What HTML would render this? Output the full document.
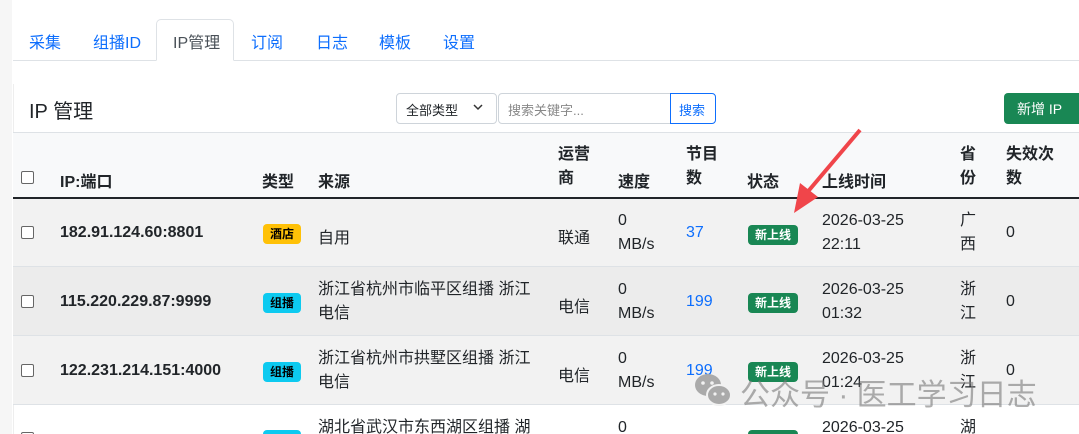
<!DOCTYPE html>
<html style="width:1079px;height:434px;overflow:hidden"><head><meta charset="utf-8"><style>
*{box-sizing:border-box;margin:0;padding:0}
body{width:1079px;height:434px;overflow:hidden;background:#fff;font-family:"Liberation Sans","Noto Sans CJK SC",sans-serif;color:#212529;font-size:16px;position:relative}
.a{position:absolute;white-space:nowrap}
.strip{left:0;top:0;width:12px;height:434px;background:#f6f6f6}
.tab{color:#0d6efd;top:29px;font-size:16px}
.cb{width:13px;height:13px;border:1px solid #666;border-radius:2px;background:#fff}
.b{font-weight:bold}
.badge{font-size:12px;font-weight:bold;border-radius:4px;text-align:center;line-height:20px;height:20px}
.blue{color:#0d6efd}
.lh{line-height:24px}
</style></head><body>
<div class="a strip"></div>
<div class="a" style="left:13px;top:60px;width:1066px;height:1px;background:#dee2e6"></div>
<div class="a" style="left:156px;top:19px;width:78px;height:42px;border:1px solid #dee2e6;border-bottom:1px solid #fff;border-radius:5px 5px 0 0;background:#fff"></div>
<div class="a tab" style="left:29px">采集</div>
<div class="a tab" style="left:93px">组播ID</div>
<div class="a tab" style="left:173px;color:#495057">IP管理</div>
<div class="a tab" style="left:251px">订阅</div>
<div class="a tab" style="left:316px">日志</div>
<div class="a tab" style="left:379px">模板</div>
<div class="a tab" style="left:443px">设置</div>
<div class="a" style="left:13px;top:84px;width:1066px;height:350px;border-left:1px solid #eee"></div>
<div class="a" style="left:13px;top:132px;width:1066px;height:1px;background:#dee2e6"></div>
<div class="a" style="left:29px;top:95px;font-size:20px">IP 管理</div>
<div class="a" style="left:396px;top:93px;width:101px;height:31px;border:1px solid #ced4da;border-radius:4px;font-size:13px;padding:6px 0 0 9px">全部类型</div>
<svg class="a" style="left:472px;top:102px" width="12" height="10"><path d="M2 3l4 4 4-4" stroke="#333" stroke-width="1.5" fill="none"/></svg>
<div class="a" style="left:498px;top:93px;width:173px;height:31px;border:1px solid #ced4da;border-radius:4px 0 0 4px;font-size:13px;color:#888;padding:6px 0 0 9px">搜索关键字...</div>
<div class="a" style="left:670px;top:93px;width:46px;height:31px;border:1px solid #0d6efd;border-radius:0 4px 4px 0;font-size:13px;color:#0d6efd;padding:6px 0 0 8px">搜索</div>
<div class="a" style="left:1004px;top:93px;width:80px;height:31px;background:#198754;border-radius:4px;color:#fff;font-size:14px;padding:6px 0 0 13px">新增 IP</div>
<div class="a" style="left:13px;top:133px;width:1066px;height:64px;background:#f8f9fa"></div>
<div class="a" style="left:13px;top:197px;width:1066px;height:2px;background:#212529"></div>
<div class="a cb" style="left:21px;top:171px"></div>
<div class="a b" style="left:60px;top:168px">IP:端口</div>
<div class="a b" style="left:262px;top:168px">类型</div>
<div class="a b" style="left:318px;top:168px">来源</div>
<div class="a b lh" style="left:558px;top:143px">运营<br>商</div>
<div class="a b" style="left:618px;top:168px">速度</div>
<div class="a b lh" style="left:686px;top:143px">节目<br>数</div>
<div class="a b" style="left:747px;top:168px">状态</div>
<div class="a b" style="left:822px;top:168px">上线时间</div>
<div class="a b lh" style="left:960px;top:143px">省<br>份</div>
<div class="a b lh" style="left:1006px;top:143px">失效次<br>数</div>
<div class="a" style="left:13px;top:199px;width:1066px;height:68px;background:#f2f2f2;border-bottom:1px solid #dee2e6"></div>
<div class="a" style="left:13px;top:267px;width:1066px;height:69px;background:#ececec;border-bottom:1px solid #dee2e6"></div>
<div class="a" style="left:13px;top:336px;width:1066px;height:69px;background:#f2f2f2;border-bottom:1px solid #dee2e6"></div>

<div class="a cb" style="left:21px;top:226px"></div>
<div class="a b" style="left:60px;top:224px">182.91.124.60:8801</div>
<div class="a badge" style="left:263px;top:224px;width:38px;background:#ffc107;color:#000">酒店</div>
<div class="a" style="left:318px;top:224px">自用</div>
<div class="a" style="left:558px;top:224px">联通</div>
<div class="a lh" style="left:618px;top:209px">0<br>MB/s</div>
<div class="a blue" style="left:686px;top:224px">37</div>
<div class="a badge" style="left:748px;top:225px;width:50px;background:#198754;color:#fff">新上线</div>
<div class="a lh" style="left:822px;top:209px">2026-03-25<br>22:11</div>
<div class="a lh" style="left:960px;top:209px">广<br>西</div>
<div class="a" style="left:1006px;top:224px">0</div>

<div class="a cb" style="left:21px;top:295px"></div>
<div class="a b" style="left:60px;top:293px">115.220.229.87:9999</div>
<div class="a badge" style="left:263px;top:293px;width:38px;background:#0dcaf0;color:#000">组播</div>
<div class="a lh" style="left:318px;top:278px">浙江省杭州市临平区组播 浙江<br>电信</div>
<div class="a" style="left:558px;top:293px">电信</div>
<div class="a lh" style="left:618px;top:278px">0<br>MB/s</div>
<div class="a blue" style="left:686px;top:293px">199</div>
<div class="a badge" style="left:748px;top:293px;width:50px;background:#198754;color:#fff">新上线</div>
<div class="a lh" style="left:822px;top:278px">2026-03-25<br>01:32</div>
<div class="a lh" style="left:960px;top:278px">浙<br>江</div>
<div class="a" style="left:1006px;top:293px">0</div>

<div class="a cb" style="left:21px;top:364px"></div>
<div class="a b" style="left:60px;top:362px">122.231.214.151:4000</div>
<div class="a badge" style="left:263px;top:362px;width:38px;background:#0dcaf0;color:#000">组播</div>
<div class="a lh" style="left:318px;top:347px">浙江省杭州市拱墅区组播 浙江<br>电信</div>
<div class="a" style="left:558px;top:362px">电信</div>
<div class="a lh" style="left:618px;top:347px">0<br>MB/s</div>
<div class="a blue" style="left:686px;top:362px">199</div>
<div class="a badge" style="left:748px;top:362px;width:50px;background:#198754;color:#fff">新上线</div>
<div class="a lh" style="left:822px;top:347px">2026-03-25<br>01:24</div>
<div class="a lh" style="left:960px;top:347px">浙<br>江</div>
<div class="a" style="left:1006px;top:362px">0</div>

<div class="a" style="left:0;top:405px;width:1079px;height:29px;overflow:hidden">
<div class="a cb" style="left:21px;top:27px"></div>
<div class="a lh" style="left:318px;top:11px">湖北省武汉市东西湖区组播 湖</div>
<div class="a lh" style="left:618px;top:11px">0</div>
<div class="a badge" style="left:748px;top:25px;width:50px;background:#198754"></div>
<div class="a badge" style="left:263px;top:25px;width:38px;background:#0dcaf0"></div>
<div class="a lh" style="left:822px;top:11px">2026-03-25</div>
<div class="a lh" style="left:960px;top:11px">湖</div>
</div>
<svg class="a" style="left:780px;top:125px" width="90" height="95"><path d="M80 5 L25 70" stroke="#f0454a" stroke-width="4" fill="none"/><path d="M14 88 L20 58 L38 72 Z" fill="#f0454a"/></svg>
<svg class="a" style="left:693px;top:372px" width="42" height="36"><ellipse cx="15" cy="13" rx="13" ry="11" fill="#aaa"/><ellipse cx="26" cy="23" rx="12" ry="10" fill="#aaa" stroke="#f2f2f2" stroke-width="2"/><circle cx="10" cy="11" r="1.8" fill="#f2f2f2"/><circle cx="19" cy="11" r="1.8" fill="#f2f2f2"/><circle cx="22" cy="22" r="1.6" fill="#f2f2f2"/><circle cx="30" cy="22" r="1.6" fill="#f2f2f2"/></svg>
<div class="a" style="left:740px;top:370px;font-size:30px;color:rgba(120,120,120,.6)">公众号 · 医工学习日志</div>
</body></html>
